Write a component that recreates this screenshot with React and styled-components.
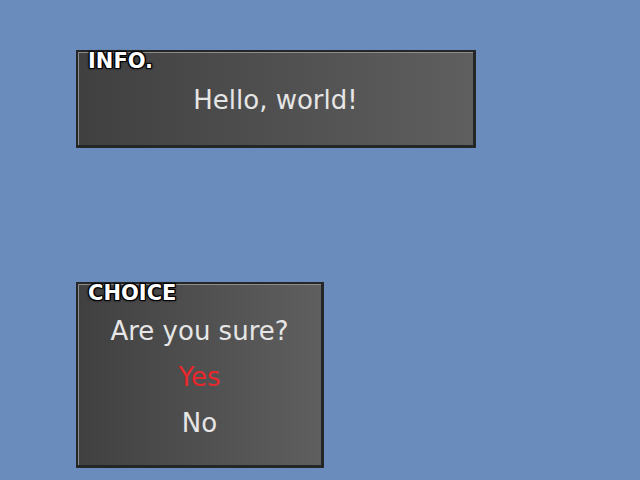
import React from 'react'
import styled, { createGlobalStyle } from 'styled-components'

const GlobalStyle = createGlobalStyle`
  html, body {
    margin: 0;
    height: 100%;
    background: #6a8cbc;
  }
  body {
    font-family: "DejaVu Sans", "Noto Sans", sans-serif;
  }
`

const Screen = styled.div`
  box-sizing: border-box;
  width: 640px;
  height: 480px;
  padding: 50px 0 0 76px;
  display: flex;
  flex-direction: column;
  align-items: flex-start;
  gap: 134px;
  overflow: hidden;
`

const Window = styled.div`
  box-sizing: border-box;
  width: ${props => props.width}px;
  height: ${props => props.height}px;
  border: 2px solid #262626;
  border-right-width: 3px;
  border-bottom-width: 3px;
  background: linear-gradient(to right, #404040, #5f5f5f);
  box-shadow: inset 1px 1px 0 #8c8c8c;
  display: flex;
  flex-direction: column;
`

// white caption with a hard black outline and a soft dark halo
const Title = styled.div`
  margin: -1px 0 0 10px;
  height: 21px;
  line-height: 21px;
  font-size: 21px;
  font-weight: 700;
  color: #fff;
  text-shadow:
    -1px -1px 0 #000, 1px -1px 0 #000, -1px 1px 0 #000, 1px 1px 0 #000,
    0 1px 0 #000, 0 -1px 0 #000, 1px 0 0 #000, -1px 0 0 #000,
    0 0 3px #111, 0 0 3px #111;
`

const Body = styled.div`
  display: flex;
  flex-direction: column;
  align-items: center;
  margin-top: ${props => props.offset}px;
`

const Line = styled.div`
  height: 46px;
  line-height: 46px;
  font-size: 26px;
  color: ${props => (props.selected ? '#e8282c' : '#e6e6e6')};
`

export default function App() {
  return (
    <>
      <GlobalStyle />
      <Screen>
        <Window width={400} height={98}>
          <Title>INFO.</Title>
          <Body offset={5}>
            <Line>Hello, world!</Line>
          </Body>
        </Window>
        <Window width={248} height={186}>
          <Title>CHOICE</Title>
          <Body offset={4}>
            <Line>Are you sure?</Line>
            <Line selected>Yes</Line>
            <Line>No</Line>
          </Body>
        </Window>
      </Screen>
    </>
  )
}
